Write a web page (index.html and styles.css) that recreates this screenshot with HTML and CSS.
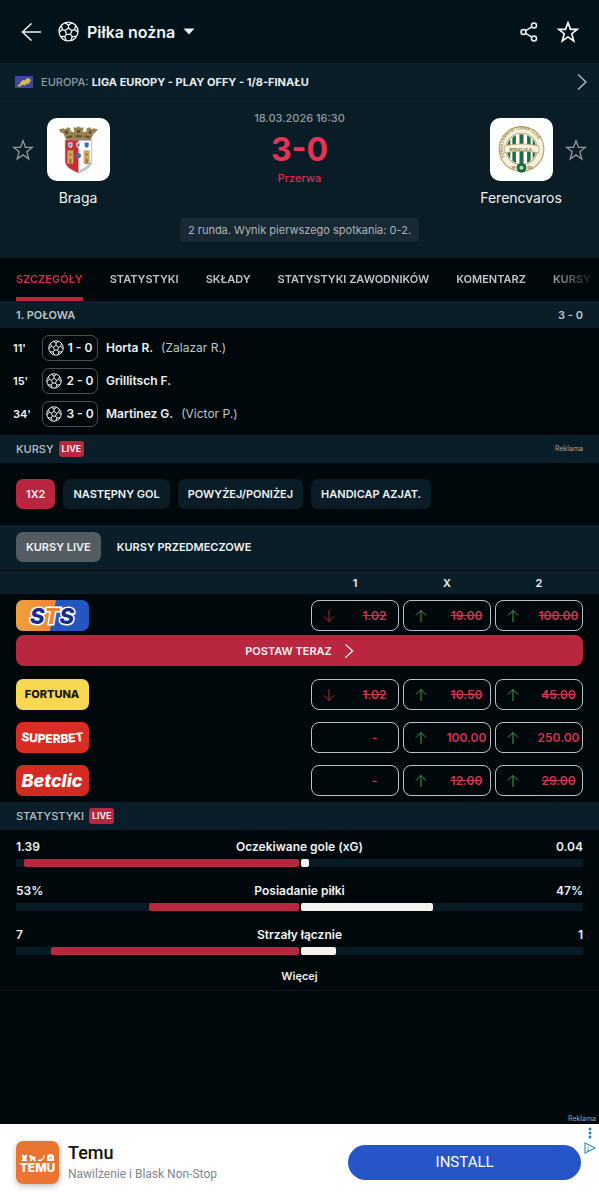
FILE: index.html
```html
<!DOCTYPE html>
<html lang="pl">
<head>
<meta charset="utf-8">
<meta name="viewport" content="width=device-width, initial-scale=1">
<title>Braga - Ferencvaros</title>
<link rel="stylesheet" href="styles.css">
</head>
<body>
<svg class="sprite" aria-hidden="true">
  <symbol id="ball" viewBox="0 0 24 24"><circle cx="12" cy="12" r="10.8"/><path d="M12 8l3.8 2.8-1.45 4.44h-4.7L8.2 10.8zM12 8V4.7M15.8 10.8l3.14-1.06M14.35 15.24l1.94 2.66M9.65 15.24L7.71 17.9M8.2 10.8L5.06 9.74M7.95 1.99L12 4.7l4.05-2.71M20.27 5.06l-1.33 4.68 3.83 3.01M21.16 17.72l-4.87.18-1.68 4.58M9.39 22.48L7.71 17.9l-4.87-.18M1.23 12.75l3.83-3.01-1.33-4.68"/></symbol>
  <symbol id="star" viewBox="0 0 22 22"><path d="M11 1.6l2.5 6.8h6.7l-5.4 4.3 2 7.3-5.8-4.1L5.200 20l2-7.300-5.400-4.300h6.700z"/></symbol>
  <symbol id="chevron" viewBox="0 0 10 18"><path d="M1 1.500l8 7.500-8 7.500"/></symbol>
  <symbol id="up" viewBox="0 0 12 14"><path d="M6 13V1.500M1 6.500l5-5 5 5"/></symbol>
  <symbol id="down" viewBox="0 0 12 14"><path d="M6 1v11.500M1 7.500l5 5 5-5"/></symbol>
</svg>

<header class="topbar">
  <button class="icon-btn" aria-label="Wstecz"><svg class="back line" viewBox="0 0 20 18"><path d="M10 .5L1 9l9 8.500M1 9h18.500"/></svg></button>
  <button class="sport"><svg class="ball-lg line"><use href="#ball"/></svg><span>Piłka nożna</span><svg class="caret" viewBox="0 0 12 7"><path d="M.5.5h11L6 6.500z"/></svg></button>
  <button class="icon-btn share-btn" aria-label="Udostępnij"><svg class="share line" viewBox="0 0 18 20"><circle cx="14" cy="3.500" r="2.500"/><circle cx="3.500" cy="10" r="2.500"/><circle cx="14" cy="16.500" r="2.500"/><path d="M5.600 8.700l6.300-3.900M5.600 11.300l6.300 3.900"/></svg></button>
  <button class="icon-btn" aria-label="Ulubione"><svg class="star star-top"><use href="#star"/></svg></button>
</header>

<a class="league" href="#liga">
  <svg class="flag" viewBox="0 0 18 12"><path fill="#3f46a0" d="M0 0h18v12H0z"/><path fill="#d9b64e" d="M3 9l2-1 .5-2L8 4l2 .2L12 2l3 .7 1 2-1.500 1.500-.5 2-2-.8-2 2.100-1.500-.7L7 9l-2 1.700L3 10.500z"/></svg>
  <span class="league-name">EUROPA: <strong>LIGA EUROPY - PLAY OFFY - 1/8-FINAŁU</strong></span>
  <svg class="chevron line"><use href="#chevron"/></svg>
</a>

<section class="match">
  <div class="teams">
    <button class="icon-btn fav" aria-label="Obserwuj Braga"><svg class="star"><use href="#star"/></svg></button>
    <div class="team">
      <div class="crest">
        <svg viewBox="0 0 62 62" aria-hidden="true">
          <path fill="#9a8352" d="M12 11l4-1 2 1 2-2 3 1v3l4 1-1-5 3 .5 2-1.500 2 1.500 3-.5-1 5 4-1v-3l3-1 2 2 2-1 4 1-2 3-2 1-3 7H19l-3-7-3-1z"/>
          <path fill="#5e502f" d="M17 13l3-1 1 3-2 1zM29 12h4l-1 3h-2zM41 13l3-1-1 4-2-1zM20 18l5-1v2l-5 1zM28 17h6v2h-6zM37 17l5 1v2l-5-1z"/>
          <path fill="#fff" stroke="#a9a6b5" stroke-width=".8" d="M18 22h26v20c0 6-6 9-13 12-7-3-13-6-13-12z"/>
          <path fill="#c62f32" d="M18 22h13v32c-7-3-13-6-13-12z"/>
          <g fill="#fff"><path d="M21 24h4v4l-2 1.500-2-1.500zM29 24h4v4l-2 1.500-2-1.500z"/></g>
          <g fill="#476da8"><path d="M22 25h2v3h-2zM30 25h2v3h-2zM37 24h4v4l-2 1.500-2-1.500z"/><circle cx="31" cy="37" r="2.500"/></g>
          <path fill="#cba760" d="M20 31l1.500 1.500L23 31l1.500 1.500L26 31v14h-6zM36 31l1.500 1.500L39 31l1.500 1.500L42 31v14h-6z"/>
          <path fill="#8b713d" d="M22 35h2v2h-2zM38 35h2v2h-2zM22 40h2v5h-2zM38 40h2v5h-2z"/>
          <path fill="none" stroke="#7c8da8" stroke-width="2" stroke-dasharray="1 1" d="M33 52c5-2 8-5 10-8"/>
        </svg>
      </div>
      <span class="team-name">Braga</span>
    </div>
    <div class="result">
      <time class="date">18.03.2026 16:30</time>
      <span class="score">3-0</span>
      <span class="phase">Przerwa</span>
    </div>
    <div class="team">
      <div class="crest">
        <svg viewBox="0 0 62 62" aria-hidden="true">
          <defs><clipPath id="disc"><circle cx="31" cy="30.500" r="14.500"/></clipPath><path id="ring" d="M14.500 38a18.500 18.500 0 1 1 33 0"/></defs>
          <circle cx="31" cy="30.500" r="22" fill="#f4efdf" stroke="#bda968" stroke-width="1.200"/>
          <circle cx="31" cy="30.500" r="15.500" fill="#fff" stroke="#bda968"/>
          <path clip-path="url(#disc)" fill="#236c43" d="M17 15h3v31h-3zM22 15h3.500v31H22zM29 15h4v31h-4zM36.500 15H40v31h-3.500zM42 15h3v31h-3z"/>
          <text class="ring-text"><textPath href="#ring">FERENCVÁROSI TORNA CLUB</textPath></text>
          <path fill="#f6f2e4" stroke="#bda968" stroke-width=".8" d="M14 27.500q17-4 34 0v7q-17-4-34 0z"/>
          <text class="ribbon-text" x="31" y="32" text-anchor="middle">BPEST.IX.K.</text>
          <text class="ribbon-text" x="23" y="50" text-anchor="middle">18</text><text class="ribbon-text" x="39" y="50" text-anchor="middle">99</text>
          <circle cx="31" cy="49" r="4.800" fill="#176a40"/><circle cx="31" cy="49" r="2" fill="#b7dac5"/>
        </svg>
      </div>
      <span class="team-name">Ferencvaros</span>
    </div>
    <button class="icon-btn fav" aria-label="Obserwuj Ferencvaros"><svg class="star"><use href="#star"/></svg></button>
  </div>
  <p class="note">2 runda. Wynik pierwszego spotkania: 0-2.</p>
</section>

<nav class="tabs">
  <a class="tab active" href="#szczegoly">SZCZEGÓŁY</a>
  <a class="tab" href="#statystyki">STATYSTYKI</a>
  <a class="tab" href="#sklady">SKŁADY</a>
  <a class="tab" href="#zawodnicy">STATYSTYKI ZAWODNIKÓW</a>
  <a class="tab" href="#komentarz">KOMENTARZ</a>
  <a class="tab" href="#kursy">KURSY</a>
</nav>

<section>
  <h2 class="section-head half"><span>1. POŁOWA</span><span>3 - 0</span></h2>
  <ul class="events">
    <li class="event"><span class="minute">11'</span><span class="goal"><svg class="ball-sm line"><use href="#ball"/></svg>1 - 0</span><strong>Horta R.</strong><span class="assist">(Zalazar R.)</span></li>
    <li class="event"><span class="minute">15'</span><span class="goal"><svg class="ball-sm line"><use href="#ball"/></svg>2 - 0</span><strong>Grillitsch F.</strong></li>
    <li class="event"><span class="minute">34'</span><span class="goal"><svg class="ball-sm line"><use href="#ball"/></svg>3 - 0</span><strong>Martinez G.</strong><span class="assist">(Victor P.)</span></li>
  </ul>
</section>

<section>
  <h2 class="section-head"><span>KURSY</span><span class="live">LIVE</span><small class="ad-label">Reklama</small></h2>
  <div class="pills">
    <button class="pill selected">1X2</button>
    <button class="pill">NASTĘPNY GOL</button>
    <button class="pill">POWYŻEJ/PONIŻEJ</button>
    <button class="pill">HANDICAP AZJAT.</button>
  </div>
  <div class="pills sub">
    <button class="pill current">KURSY LIVE</button>
    <button class="pill plain">KURSY PRZEDMECZOWE</button>
  </div>
  <table class="odds">
    <thead><tr><th class="brand-col"></th><th>1</th><th>X</th><th>2</th></tr></thead>
    <tbody>
      <tr class="first">
        <td><svg class="brand" viewBox="0 0 73 31" role="img" aria-label="STS"><defs><linearGradient id="or"><stop stop-color="#f0a03d"/><stop offset="1" stop-color="#ee8432"/></linearGradient></defs><path fill="#2456c0" d="M0 0h73v31H0z"/><path fill="url(#or)" d="M0 0h40l-6 31H0z"/><text class="sts" x="36" y="24" text-anchor="middle">S<tspan class="sts-t">T</tspan>S</text></svg></td>
        <td><button class="odd"><svg class="dir down line"><use href="#down"/></svg><s>1.02</s></button></td>
        <td><button class="odd"><svg class="dir line"><use href="#up"/></svg><s>19.00</s></button></td>
        <td><button class="odd"><svg class="dir line"><use href="#up"/></svg><s>100.00</s></button></td>
      </tr>
      <tr class="cta-row"><td colspan="4"><a class="cta" href="#postaw">POSTAW TERAZ<svg class="chevron line"><use href="#chevron"/></svg></a></td></tr>
      <tr>
        <td><svg class="brand" viewBox="0 0 73 31" role="img" aria-label="Fortuna"><path fill="#f8d850" d="M0 0h73v31H0z"/><text class="fortuna" x="36" y="19" text-anchor="middle">FORTUNA</text></svg></td>
        <td><button class="odd"><svg class="dir down line"><use href="#down"/></svg><s>1.02</s></button></td>
        <td><button class="odd"><svg class="dir line"><use href="#up"/></svg><s>10.50</s></button></td>
        <td><button class="odd"><svg class="dir line"><use href="#up"/></svg><s>45.00</s></button></td>
      </tr>
      <tr>
        <td><svg class="brand" viewBox="0 0 73 31" role="img" aria-label="Superbet"><defs><path id="smile" d="M0 18q36 6 73 0"/></defs><path fill="#d92c22" d="M0 0h73v31H0z"/><text class="superbet" text-anchor="middle"><textPath href="#smile" startOffset="50%">SUPERBET</textPath></text></svg></td>
        <td><button class="odd"><span class="dir"></span><span class="value">-</span></button></td>
        <td><button class="odd"><svg class="dir line"><use href="#up"/></svg><span class="value">100.00</span></button></td>
        <td><button class="odd"><svg class="dir line"><use href="#up"/></svg><span class="value">250.00</span></button></td>
      </tr>
      <tr>
        <td><svg class="brand" viewBox="0 0 73 31" role="img" aria-label="Betclic"><path fill="#d32b22" d="M0 0h73v31H0z"/><text class="betclic" x="36" y="22" text-anchor="middle">Betclic</text></svg></td>
        <td><button class="odd"><span class="dir"></span><span class="value">-</span></button></td>
        <td><button class="odd"><svg class="dir line"><use href="#up"/></svg><s>12.00</s></button></td>
        <td><button class="odd"><svg class="dir line"><use href="#up"/></svg><s>29.00</s></button></td>
      </tr>
    </tbody>
  </table>
</section>

<section class="stats">
  <h2 class="section-head"><span>STATYSTYKI</span><span class="live">LIVE</span></h2>
  <div class="stat">
    <div class="stat-text"><span>1.39</span><span>Oczekiwane gole (xG)</span><span>0.04</span></div>
    <div class="bars"><div class="bar home"><i style="width:97%"></i></div><div class="bar away"><i style="width:3%"></i></div></div>
  </div>
  <div class="stat">
    <div class="stat-text"><span>53%</span><span>Posiadanie piłki</span><span>47%</span></div>
    <div class="bars"><div class="bar home"><i style="width:53%"></i></div><div class="bar away"><i style="width:47%"></i></div></div>
  </div>
  <div class="stat">
    <div class="stat-text"><span>7</span><span>Strzały łącznie</span><span>1</span></div>
    <div class="bars"><div class="bar home"><i style="width:87.5%"></i></div><div class="bar away"><i style="width:12.5%"></i></div></div>
  </div>
  <a class="more" href="#wiecej">Więcej</a>
</section>

<aside class="ad-wrap">
  <small class="ad-label">Reklama</small>
  <div class="ad">
    <svg class="temu" viewBox="0 0 43 43" role="img" aria-label="Temu"><path fill="#eb7430" d="M0 0h43v43H0z"/><g fill="#fff"><path d="M6 13l1.500 1.500h2L11 13v3l-1 1 1.500 3h-6L7 17l-1-1zM14 14l2 1 2 1 2-.5-1 2 1 2.500h-2l-1.500-2-1 2H14l.5-3-1.500-1.500zM22 19l4-1 2-4 1 .5-1 3-3 2.500h-3zM31 20v-3.500a3.500 3.500 0 0 1 7 0V20z"/></g><path fill="none" stroke="#eb7430" d="M33 16.500l1.500 1 1.500-1"/><text class="temu-text" x="21.500" y="31" text-anchor="middle">TEMU</text></svg>
    <div class="ad-copy"><span class="ad-title">Temu</span><span class="ad-sub">Nawilżenie i Blask Non-Stop</span></div>
    <button class="install">INSTALL</button>
    <div class="choices"><svg viewBox="0 0 12 28" aria-hidden="true"><g fill="#2d83b0"><circle cx="6" cy="3" r="1.500"/><circle cx="6" cy="7" r="1.500"/><circle cx="6" cy="11" r="1.500"/></g><path fill="none" stroke="#3a9bc4" stroke-width="1.200" d="M1 17v10l10-5zM4 21v1M4 23v3"/></svg></div>
  </div>
</aside>
</body>
</html>
```
FILE: styles.css
```css
* { box-sizing: border-box; }

body {
  margin: 0;
  min-height: 100vh;
  display: flex;
  flex-direction: column;
  background: #01080c;
  color: #eef2f3;
  font: 500 12px/16px Inter, "Noto Sans", sans-serif;
  overflow-x: hidden;
}

button { border: 0; padding: 0; background: none; color: inherit; font: inherit; cursor: pointer; }
a { color: inherit; text-decoration: none; }
svg { display: block; flex: none; }
h2, p, ul { margin: 0; padding: 0; }

.sprite { display: none; }
.line { fill: none; stroke: currentColor; stroke-width: 1.3; }
.icon-btn { display: flex; align-items: center; justify-content: center; }

.topbar { display: flex; align-items: center; height: 63px; padding: 0 20px 0 21px; background: #01121a; }
.back { width: 21px; height: 18px; stroke-width: 1.5; }
.sport { display: flex; align-items: center; gap: 8px; margin-left: 16px; margin-right: auto; font-size: 16px; font-weight: 600; }
.ball-lg { width: 21px; height: 21px; stroke-width: 1.5; }
.caret { width: 12px; height: 7px; fill: currentColor; }
.share { width: 18px; height: 20px; stroke-width: 1.5; }
.share-btn { margin-right: 19px; }
.star { width: 22px; height: 22px; fill: none; stroke: #929da2; stroke-width: 1.3; }
.star-top { stroke: #fff; stroke-width: 1.6; }

.league { display: flex; align-items: center; height: 39px; padding: 0 12px 0 15px; background: #0a1e29; border-bottom: 1px solid #10242f; font-size: 11px; }
.flag { width: 18px; height: 12px; margin-right: 8px; }
.league-name { flex: 1; color: #8e9da4; }
.league-name strong { color: #e7edef; font-weight: 700; }
.chevron { width: 10px; height: 18px; color: #b9c3c8; }

.match { background: #0a1c26; padding: 8px 12px 16px; }
.teams { display: flex; align-items: flex-start; }
.fav { height: 80px; width: 22px; }
.team { width: 88px; display: flex; flex-direction: column; align-items: center; padding-top: 8px; }
.crest { width: 63px; height: 63px; border-radius: 10px; background: #fff; overflow: hidden; }
.team-name { margin-top: 8px; font-size: 14px; line-height: 18px; font-weight: 400; }
.ring-text { font: 600 4px Inter, sans-serif; fill: #9a8749; }
.ribbon-text { font: 700 4px Inter, sans-serif; fill: #8c793f; }
.result { flex: 1; display: flex; flex-direction: column; align-items: center; }
.date { color: #919ca1; font-size: 11px; }
.score { color: #e43456; font-size: 32px; line-height: 40px; margin-top: 4px; font-weight: 700; }
.phase { color: #d92c53; font-size: 11px; }
.note { width: max-content; margin: 11px auto 0; padding: 4px 8px; border-radius: 4px; background: #182933; color: #aab4b8; font-size: 11px; font-weight: 400; }

.tabs { display: flex; gap: 27px; height: 43px; padding: 0 16px; overflow: hidden; font-size: 11px; font-weight: 600; color: #bfc3cc; white-space: nowrap; mask-image: linear-gradient(to left, transparent 2px, #000 56px); }
.tab { flex: none; line-height: 42px; }
.tab.active { color: #d52c4c; border-bottom: 4px solid #b9263f; border-radius: 2px 2px 0 0; }

.section-head { display: flex; align-items: center; gap: 5px; height: 28px; padding: 0 16px; background: #0a1e29; color: #b9c3c8; font-size: 11px; font-weight: 500; line-height: 16px; }
.half { height: 27px; justify-content: space-between; font-weight: 600; }
.live { padding: 0 3px; border-radius: 3px; background: #b9263f; color: #fff; font-size: 9px; font-weight: 600; }
.ad-label { font-size: 7px; line-height: 8px; font-weight: 400; color: #9ba5aa; margin-left: auto; }

.events { display: flex; flex-direction: column; gap: 7px; list-style: none; padding: 7px 12px 8px 13px; }
.event { display: flex; align-items: center; }
.event strong { font-weight: 600; margin-left: 8px; }
.minute { width: 29px; font-size: 11px; font-weight: 600; }
.goal { display: flex; align-items: center; justify-content: center; gap: 4px; width: 56px; height: 26px; border: 1px solid #485056; border-radius: 7px; font-weight: 600; white-space: nowrap; }
.ball-sm { width: 16px; height: 16px; stroke-width: 1.5; }
.assist { margin-left: 8px; color: #bdc5c9; font-weight: 400; }

.pills { display: flex; gap: 8px; padding: 16px; }
.pill { height: 30px; padding: 0 10px; border-radius: 7px; background: #0a1c26; font-size: 11px; font-weight: 600; white-space: nowrap; }
.pill.selected { background: #b9263f; }
.sub { gap: 6px; padding: 7px 16px 8px; background: #0a1e29; border-bottom: 1px solid #01080c; }
.pill.current { background: #535c61; }
.pill.plain { background: none; }

.odds { width: 100%; table-layout: fixed; border-collapse: collapse; }
.odds th { height: 23px; padding: 0; background: #0a1e29; font-size: 11px; font-weight: 600; width: 92px; }
.odds th.brand-col { width: auto; }
.odds th:last-child { width: 106px; padding-right: 14px; }
.odds td { padding: 6px 2px; }
.odds .first td { padding-bottom: 2px; }
.odds td:first-child { padding-left: 16px; }
.odds td:last-child { padding-right: 16px; }
.odds .cta-row td { padding: 2px 16px 7px; }
.brand { width: 73px; height: 31px; border-radius: 7px; }
.odd { display: flex; align-items: center; width: 100%; height: 31px; border: 1px solid #bbc2c5; border-radius: 8px; color: #d53350; font-weight: 600; }
.odd s, .value { flex: 1; text-align: center; padding-left: 16px; }
.dir { flex: none; width: 12px; height: 14px; margin-left: 11px; color: #3fa04c; stroke-width: 1; }
.dir.down { color: #b5282e; }
.cta { display: flex; align-items: center; justify-content: center; gap: 12px; height: 31px; border-radius: 8px; background: #b9263f; font-size: 11px; font-weight: 600; }
.cta .chevron { color: #fff; height: 16px; }
.sts { font: italic 800 22px Inter, sans-serif; fill: #152c8e; stroke: #fff; stroke-width: 3px; paint-order: stroke; }
.sts-t { fill: #ee8432; }
.fortuna { font: 800 11px Inter, sans-serif; fill: #16150e; }
.superbet { font: 800 12px Inter, sans-serif; fill: #fff; }
.betclic { font: italic 800 18px Inter, sans-serif; fill: #fff; }

.stats { border-bottom: 1px solid #0a171e; }
.stat { padding: 9px 16px 0; height: 44px; }
.stat-text { display: grid; grid-template-columns: 1fr auto 1fr; font-weight: 600; }
.stat-text span:last-child { text-align: right; }
.bars { display: flex; gap: 2px; margin-top: 4px; }
.bar { flex: 1; display: flex; height: 8px; background: #081a24; }
.bar i { border-radius: 2px; background: #b9263f; }
.home { justify-content: flex-end; }
.away i { background: #f3f2ee; }
.more { display: block; padding: 6px 0; text-align: center; font-size: 11px; font-weight: 600; }

.ad-wrap { margin-top: auto; display: flex; flex-direction: column; }
.ad-wrap .ad-label { padding: 0 3px 1px 0; }
.ad { display: flex; align-items: center; min-height: 76px; padding-left: 16px; background: #fff; color: #111; font-family: Roboto, sans-serif; }
.temu { width: 43px; height: 43px; border-radius: 7px; box-shadow: 0 2px 6px #0004; }
.temu-text { font: 800 12px Inter, sans-serif; fill: #fff; }
.ad-copy { display: flex; flex-direction: column; gap: 2px; margin-left: 9px; width: 40%; }
.ad-title { font-size: 18px; line-height: 22px; }
.ad-sub { color: #80868b; line-height: 16px; font-weight: 400; white-space: nowrap; }
.install { flex: 1; margin-left: 47px; height: 35px; border-radius: 18px; background: #2655c7; color: #fff; font-size: 15px; font-weight: 400; }
.choices { align-self: flex-start; padding: 2px 3px 0; }
.choices svg { width: 12px; height: 28px; }
```
